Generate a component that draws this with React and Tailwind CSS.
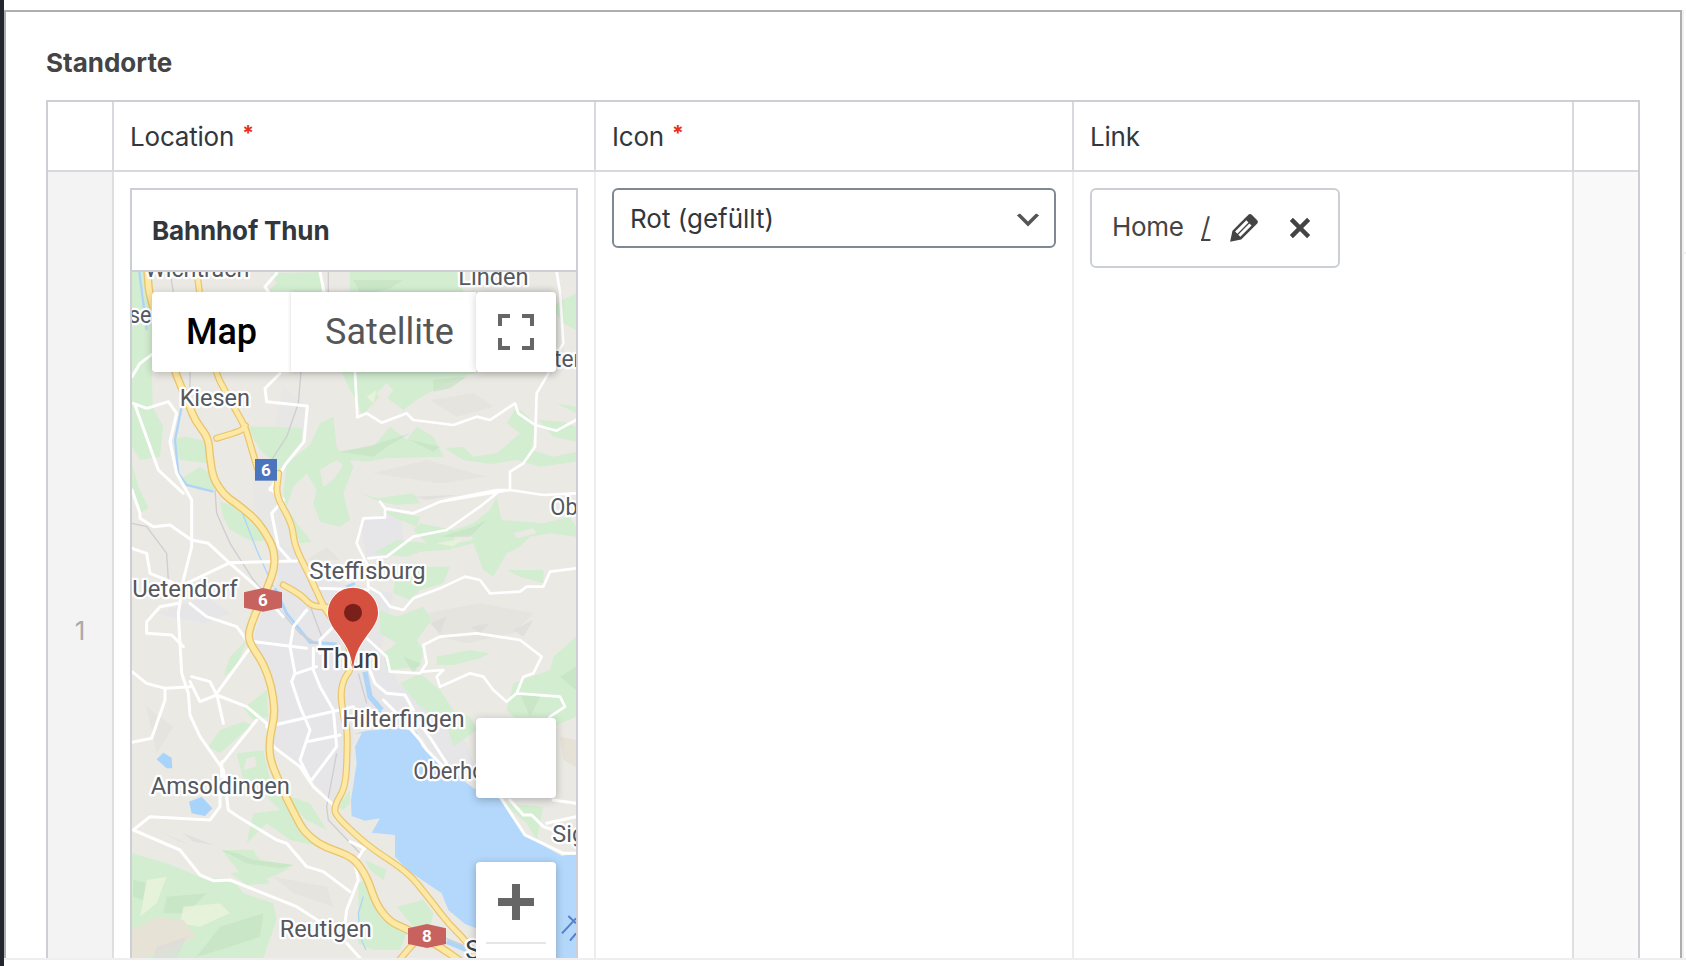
import React from 'react';

const LABELS = [
  ['Wichtrach', 75, 50, 313],
  ['Linden', 1015, 75, 211],
  ['seen', 27, 188, 136],
  ['ten', 1302, 320, 96],
  ['Kiesen', 179, 437, 211],
  ['Oberlangenegg', 1291, 766, 445],
  ['Steffisburg', 568, 956, 349],
  ['Uetendorf', 37, 1012, 316],
  ['Hilterfingen', 667, 1400, 367],
  ['Oberhofen', 880, 1556, 308],
  ['Amsoldingen', 92, 1603, 418],
  ['Sigriswil', 1297, 1745, 262],
  ['Reutigen', 479, 2032, 276],
];

const MOTORWAY = [
  [[82, 30], [88, 110], [165, 336], [205, 430], [225, 480], [265, 535], [270, 595], [280, 655], [312, 705], [355, 735], [415, 785], [460, 860], [465, 920], [440, 990], [405, 1062], [385, 1120], [390, 1150], [430, 1210], [455, 1280], [465, 1360], [448, 1440], [450, 1500], [490, 1595], [520, 1655], [550, 1712], [600, 1755], [700, 1792], [740, 1850], [770, 1935], [810, 1985], [870, 2012], [960, 2060], [1030, 2110]],
];
const MAIN_ROADS = [
  [[230, 30], [240, 110], [285, 336], [330, 420], [375, 500], [390, 550], [412, 625]],
  [[476, 640], [468, 705], [515, 790], [525, 860], [575, 960], [620, 1060], [680, 1120], [695, 1225], [672, 1255], [662, 1300], [670, 1370], [683, 1410], [678, 1575], [645, 1635], [645, 1665], [740, 1755], [865, 1838], [935, 1925], [985, 1990], [1045, 2050], [1080, 2110]],
  [[290, 535], [365, 512], [376, 497]],
  [[490, 975], [540, 1003], [575, 1038], [622, 1042]],
  [[830, 2110], [885, 2045], [920, 2020]],
];

// Rounds a polyline's corners with a short quadratic curve at each vertex.
function smooth(pts) {
  let d = `M${pts[0][0]} ${pts[0][1]}`;
  for (let i = 1; i < pts.length - 1; i += 1) {
    const [px, py] = pts[i - 1];
    const [x, y] = pts[i];
    const [nx, ny] = pts[i + 1];
    d += `L${x + (px - x) * 0.4} ${y + (py - y) * 0.4}Q${x} ${y} ${x + (nx - x) * 0.4} ${y + (ny - y) * 0.4}`;
  }
  const last = pts[pts.length - 1];
  return `${d}L${last[0]} ${last[1]}`;
}

function Terrain() {
  return (
    <>
      <g fill="#e6e5e7">
        <path d="M440 830L530 880L620 960L820 1000L800 1090L780 1180L830 1260L880 1360L830 1400L700 1410L690 1560L640 1630L560 1540L460 1450L450 1250L400 1140L440 1020L480 960Z" />
        <path d="M720 790L840 740L850 850L800 900L740 900ZM110 1060L260 1010L330 1060L250 1090ZM780 1240L900 1310L1040 1450L1070 1540L960 1510L900 1420Z" />
        <path d="M490 380L560 440L550 520L470 600L460 520ZM400 620L480 700L530 880L470 860L400 740Z" opacity=".7" />
      </g>
      <g fill="#e3e1dc" opacity=".6">
        <path d="M650 100L760 110L830 150L740 170ZM930 420L1060 400L1120 440L1010 470ZM760 640L920 600L1100 650L960 670ZM560 900L620 860L660 900ZM920 1060L1080 1030L1240 1060L1180 1120L1040 1150L960 1130ZM80 1340L160 1400L110 1480ZM460 1850L620 1880L640 1940L520 1900Z" />
      </g>
      <g fill="#d3edd1">
        <path d="M36 36H70L100 200L95 300L98 440L130 500L120 590L60 600L36 560ZM36 610L55 680L85 745L60 760L36 690Z" />
        <path d="M450 40L600 36L605 96H440L470 70ZM690 36H1010L1030 96H690ZM1290 140L1368 100V210L1330 190Z" />
        <path d="M665 336H1070L1000 360L940 390L890 420L850 450L810 420L790 400L750 440L725 470L715 430L690 390Z" />
        <path d="M170 535L200 530L265 545L270 590L278 600L262 610L180 600L165 570ZM178 660L240 620L268 640L285 690L240 690ZM300 725L350 740L415 795L440 840L400 845L330 810L310 770Z" />
        <path d="M380 500L470 500L545 505L545 545L500 600L480 640L465 610L420 570Z" />
        <path d="M500 610L570 555L600 490L640 470L650 560L660 575L760 560L810 500L860 540L890 500L940 530L955 560L970 590L800 595L740 605L690 600L700 620L670 700L680 740L690 780L660 800L600 785L580 730L590 690L560 640L520 680L500 740L530 790L575 845L540 850L510 790L490 700Z" />
        <path d="M975 565L1030 560L1060 590L1130 580L1200 520L1160 490L1190 440L1225 470L1245 500L1235 570L1300 590L1368 575V605L1260 620L1190 600L1110 612L1030 600ZM1255 480L1330 485L1368 500V545L1300 530ZM1310 430L1368 440V460Z" />
        <path d="M720 700L770 715L880 700L900 730L830 735L780 725ZM780 750L900 770L890 800L840 780ZM760 880L830 840L920 850L880 810L900 790L1000 810L1060 790L1110 750L1130 710L1145 780L1270 790L1350 770L1368 800V830L1290 820L1230 830L1200 860L1160 880L1120 950L1090 930L1060 850L980 870L900 875L860 890Z" />
        <path d="M830 920L990 920L970 970L900 990L870 1020L820 1000ZM1160 930L1270 930L1270 970L1200 950Z" />
        <path d="M780 1050L830 1070L910 1040L935 1080L890 1140L910 1170L900 1220L800 1230L790 1180L830 1150L780 1120Z" />
        <path d="M950 1190L1050 1170L1110 1180L1080 1195L1000 1215L950 1215ZM840 1270L900 1240L960 1290L1000 1350L1050 1370L1070 1410L1000 1460L980 1390L900 1340ZM1180 1270L1290 1230L1300 1190L1368 1130V1370L1300 1400L1210 1400L1160 1350Z" />
        <path d="M380 1140L350 1220L310 1250L330 1190ZM440 1290L445 1370L400 1380L370 1345ZM370 1385L395 1395L300 1480L265 1460L300 1410ZM350 1480L430 1470L450 1560L480 1600L570 1630L620 1710L560 1680L530 1650L600 1760L510 1740L440 1690L380 1750L400 1660L480 1650L440 1610L370 1560Z" />
        <path d="M305 1770L400 1770L420 1800L520 1815L480 1840L430 1860L360 1840ZM330 1840L420 1830L450 1870L380 1875ZM36 1780L140 1810L190 1830L240 1850L340 1860L370 1900L460 1930L470 1980L430 2094H36Z" />
        <path d="M715 1870L740 1860L780 1970L860 2020L840 2070L760 2070L715 2050ZM830 1940L910 1920L940 1960L930 2010L880 2000ZM735 1800L800 1830L790 1860L750 1830ZM1150 1630L1270 1640L1250 1740L1220 1690Z" />
        <path d="M690 1590L650 1640L670 1650L690 1630Z" />
      </g>
      <g fill="#ebe9e4">
        <path d="M600 630L650 600L670 615L640 660L610 680ZM380 1495L405 1490L410 1520L370 1530ZM770 400L800 370L820 390L790 430ZM1000 830L1050 820L1060 840L1010 850ZM1180 820L1240 805L1250 820L1190 835Z" />
      </g>
      <g fill="#c3e2c1" opacity=".65">
        <path d="M700 60L850 60L810 85L770 96H720ZM940 360L1040 350L990 385L940 395ZM660 575L760 555L870 520L800 560L760 590ZM870 540L960 560L940 575Z" />
        <path d="M960 830L1060 800L1100 780L1050 830ZM850 1190L900 1210L880 1240ZM1200 1300L1260 1310L1230 1370ZM1320 1250L1368 1220V1290Z" />
        <path d="M305 1770L350 1780L400 1800L520 1815L480 1825L380 1810ZM40 1860L80 1870L70 1920L40 1910ZM140 1910L260 1900L200 1960L130 1960ZM300 2000L430 1960L420 2030L330 2060L230 2090Z" />
      </g>
      <g fill="#e9f2db" opacity=".85">
        <path d="M740 410L770 390L760 430ZM950 850L1030 835L1000 860ZM80 1860L140 1850L110 1930L60 1970ZM190 1940L300 1930L330 1960L240 2000L180 1990Z" />
      </g>
      <path fill="#e7e2d6" d="M36 2010L110 1970L190 1980L230 2030L160 2060L70 2094H36ZM1320 1430L1368 1440V1520L1330 1500Z" />
      <g fill="#dddbd8" opacity=".7">
        <path d="M120 1715L210 1755L170 1740ZM190 1720L280 1755L220 1745ZM930 1090L980 1070L960 1120ZM1050 1100L1110 1090L1080 1120ZM1180 1110L1240 1080L1210 1130ZM880 710L1010 705L920 720ZM110 2060L200 2030L170 2094H100Z" />
      </g>
    </>
  );
}

function Water() {
  return (
    <>
      <path
        fill="#b3d8fb"
        d="M700 1422L740 1412L835 1405L890 1415L905 1460L965 1510L1060 1585L1150 1620L1175 1660L1215 1725L1325 1788L1368 1780V2110H1080L1068 2005L1035 1992L985 1950L965 1900L865 1832L825 1790L825 1725L755 1718L780 1675L735 1682L695 1668L693 1620L710 1510L705 1460L725 1420Z"
      />
      <path fill="#a8d3fb" d="M110 1498L130 1478L155 1493L157 1525L140 1525ZM207 1625L245 1610L277 1645L255 1668L215 1660Z" />
      <g fill="none" stroke="#aed5f8" strokeWidth="7">
        <path d="M58 36L70 130L80 210M185 440L165 540L175 640L200 675L280 695" />
        <path d="M465 985L500 1060L570 1147L650 1152" strokeWidth="9" />
        <path d="M735 1235L750 1310L785 1350" strokeWidth="16" />
        <path d="M360 740L410 870L460 980M730 1910L715 1960L720 2030L738 2070" strokeWidth="4" />
        <path d="M680 980L705 970M780 1345V1362" strokeWidth="8" />
        <path d="M980 2045L1040 2070" strokeWidth="14" />
      </g>
    </>
  );
}

function Roads() {
  return (
    <>
      <g fill="none" stroke="#cfcdd0" strokeWidth="4" strokeLinejoin="round">
        <path d="M150 36L160 96M210 336V390M543 336L535 430L500 530L455 600M625 36V96M285 690L290 760L330 850L400 960L540 1120L590 1150M36 790L80 800L140 880L145 960L190 975M560 1010L605 1130M715 1240L740 1330M650 1480L620 1640L625 1680L720 1780M940 2020L1040 2060" />
      </g>
      <g fill="none" stroke="#fff" strokeWidth="9" strokeLinejoin="round" strokeLinecap="round">
        <path d="M36 350L60 310L100 280M40 430L80 445L145 425L170 460L150 545L170 640L215 720V860L190 960L175 1060L185 1240L205 1300L210 1365L240 1430L310 1530L325 1650L355 1670L470 1740L500 1750L560 1820L610 1835L690 1895" />
        <path d="M45 435L115 630L190 700M36 690L60 760V775L100 800L150 795L215 840L265 850L330 910L410 980L490 1070M200 970L330 908L530 903M36 865L80 880L90 940L190 980M175 1030L120 1040L80 1085V1120L155 1125L190 1160M210 1030L260 1070L350 1100L380 1140M405 1145L560 1165" />
        <path d="M480 340L435 385L440 425L562 438L552 545L495 615L450 690M470 40L435 80L445 96M600 36L612 96" />
        <path d="M450 685L490 720L455 760L475 860L510 900M400 1150L290 1300L310 1390M36 1235L80 1270L135 1285L210 1280M135 1285L135 1320L95 1435L36 1447M210 1265L240 1325L290 1305L270 1265L215 1250M290 1305L380 1340L410 1365L440 1390L460 1460L540 1520L580 1580L640 1635" />
        <path d="M410 1380L310 1505M305 1505V1550M300 1600V1640L270 1680L90 1670L40 1710L180 1770L240 1845L280 1862L330 1860L530 1940L600 1985M680 2050L720 2094M735 1760L705 1810L715 1860L680 1950L675 1990L690 2010" />
        <path d="M560 1050L520 1100L510 1160L525 1240L515 1265L540 1340L570 1410L540 1500L570 1560M580 1165L580 1230L600 1280L640 1350L650 1460L575 1560M440 1400L700 1340M560 1445L660 1425M530 1240L590 1220M600 1180V1140L640 1100M590 985L745 990M690 1745L735 1765" />
        <path d="M705 336L712 472L740 460L785 488L860 460L880 480L1000 495L1070 470L1110 480L1185 430L1195 460L1245 495L1310 512L1368 480M1285 340L1250 400L1245 560L1210 610L1170 635V690L1270 705L1368 700M980 720L1130 690L1170 690M1310 36L1320 96L1330 250L1300 300" strokeWidth="8" />
        <path d="M780 725L795 745L880 760L960 725L1170 690M795 745V772L730 775L710 850L740 910L745 980M745 895L800 890L880 830L980 810L1080 740L1130 700" strokeWidth="8" />
        <path d="M745 980L780 1000L810 1040L850 1050L880 1015L960 985L1035 950L1080 960L1110 1000L1200 995L1220 980H1270L1290 935L1368 925" strokeWidth="8" />
        <path d="M740 1135L800 1190L810 1235L900 1240L920 1210L910 1155L960 1130L1070 1120L1200 1140L1265 1190L1240 1240L1210 1250L1190 1300L1160 1325L1120 1290L1090 1250L1050 1240L960 1280L950 1250L970 1230L905 1235M1190 1300L1320 1310L1335 1340L1290 1370L1270 1400" strokeWidth="8" />
        <path d="M730 1180L765 1270L800 1300L855 1305L880 1350M790 1320L840 1370L900 1440L920 1470L980 1530M900 1390L935 1440L980 1510M1140 1610L1215 1725L1330 1780L1368 1780M1170 1620L1210 1665H1235L1270 1700L1300 1710M1300 1620L1368 1630M1280 1690L1368 1670" />
      </g>
      <g fill="none" stroke="#e8c46f" strokeLinejoin="round">
        <g strokeWidth="25">{MOTORWAY.map((p) => <path key={p[0].join()} d={smooth(p)} />)}</g>
        <g strokeWidth="21" strokeLinecap="round">{MAIN_ROADS.map((p) => <path key={p[0].join()} d={smooth(p)} />)}</g>
      </g>
      <g fill="none" stroke="#fde8a4" strokeLinejoin="round">
        <g strokeWidth="17">{MOTORWAY.map((p) => <path key={p[0].join()} d={smooth(p)} />)}</g>
        <g strokeWidth="14" strokeLinecap="round">{MAIN_ROADS.map((p) => <path key={p[0].join()} d={smooth(p)} />)}</g>
      </g>
    </>
  );
}

function Labels() {
  return (
    <g className="font-['Roboto',sans-serif]" fontSize="71" stroke="#fff" strokeWidth="14" strokeLinejoin="round" paintOrder="stroke" fill="#55585e">
      {LABELS.map(([t, x, y, w]) => (
        <text key={t} x={x} y={y} textLength={w} lengthAdjust="spacingAndGlyphs">{t}</text>
      ))}
      <text x="592" y="1224" fontSize="82" textLength="186" lengthAdjust="spacingAndGlyphs" fill="#3c4046">Thun</text>
      <text x="1036" y="2096" fontSize="76" fill="#3c4046">Spiez</text>
    </g>
  );
}

function Shields() {
  return (
    <g className="font-['Roboto',sans-serif] font-bold" fill="#fff" fontSize="51" textAnchor="middle">
      <rect x="405" y="597" width="66" height="65" fill="#4a74bd" />
      <text x="438" y="648">6</text>
      <path fill="#c8625f" d="M372 997L429 984L486 997V1043L429 1055L372 1043Z" />
      <text x="429" y="1038">6</text>
      <path fill="#c8625f" d="M864 2005L921 1992L978 2005V2052L921 2064L864 2052Z" />
      <text x="921" y="2046">8</text>
    </g>
  );
}

function GoogleMap() {
  return (
    <div className="relative h-[686px] overflow-hidden bg-[#ebe9e4] font-['Roboto',sans-serif]">
      <svg className="block h-[686px] w-[444px]" viewBox="36 36 1332 2058">
        <Terrain />
        <Water />
        <Roads />
        <path d="M1326 2020L1368 1975M1350 2042L1368 2020M1345 1968L1368 1990" stroke="#5580c8" strokeWidth="6" fill="none" />
        <Labels />
        <Shields />
        <path
          d="M699 1230C694 1175 674 1150 650 1117C634 1095 624 1078 624 1058A75 75 0 0 1 774 1058C774 1078 764 1095 748 1117C724 1150 704 1175 699 1230Z"
          fill="#d5503f"
          stroke="#fff"
          strokeWidth="5"
          paintOrder="stroke"
        />
        <circle cx="699" cy="1058" r="27" fill="#7b1f1a" />
      </svg>
      <div className="absolute left-5 top-5 flex h-20 w-[404px] rounded-[4px] shadow-[0_2px_8px_rgba(0,0,0,0.22)]">
        <div className="flex w-[139px] items-center justify-center rounded-l-[4px] bg-white text-[36px] font-medium text-black">
          Map
        </div>
        <div className="flex w-[185px] items-center bg-white pl-[34px] text-[36px] text-[#565656] shadow-[0_0_4px_rgba(0,0,0,0.16)]">
          Satellite
        </div>
        <div className="flex w-20 items-center justify-center rounded-[4px] bg-white shadow-[0_0_8px_rgba(0,0,0,0.18)]">
          <svg className="size-9" viewBox="0 0 18 18" fill="#666">
            <path d="M0 0v6h2V2h4V0H0zm16 0h-4v2h4v4h2V0h-2zm0 16h-4v2h6v-6h-2v4zM2 12H0v6h6v-2H2v-4z" />
          </svg>
        </div>
      </div>
      <div className="absolute left-[344px] top-[446px] size-20 rounded-[4px] bg-white shadow-[0_2px_8px_rgba(0,0,0,0.25)]" />
      <div className="absolute left-[344px] top-[590px] flex h-[162px] w-20 flex-col items-center rounded-[4px] bg-white pt-[22px] shadow-[0_2px_8px_rgba(0,0,0,0.25)]">
        <svg className="size-9" viewBox="0 0 18 18" fill="#666">
          <path d="M18 7h-7V0H7v7H0v4h7v7h4v-7h7z" />
        </svg>
        <div className="mt-[22px] h-[2px] w-[60px] bg-[#e6e6e6]" />
      </div>
    </div>
  );
}

function HeadCell({ children, required }) {
  return (
    <div className="flex items-center border-l-2 border-[#d7d9de] pl-4 text-[26px] text-[#32373c]">
      <span className="tracking-[-0.2px]">{children}</span>
      {required && <span className="ml-2 pb-[5px] text-[21px] font-bold text-[#e62e22]">*</span>}
    </div>
  );
}

export default function App() {
  return (
    <div className="flex h-[966px] w-[1686px] overflow-hidden bg-white font-['Inter',sans-serif]">
      <div className="w-1 bg-[#23272d]" />
      <div className="flex w-[1682px] flex-col pt-[10px]">
        <div className="flex h-[948px]">
          <div className="w-[1678px] overflow-hidden border-2 border-b-0 border-[#aeaeb0] pl-10">
            <h2 className="flex h-[88px] items-center pt-[13px] text-[26px] font-bold leading-8 text-[#444]">
              Standorte
            </h2>
            <div className="w-[1594px] border-2 border-b-0 border-[#cdcfd4]">
              <div className="grid h-[70px] grid-cols-[64px_482px_478px_500px_66px] border-b-2 border-[#d7d9de]">
                <div />
                <HeadCell required>Location</HeadCell>
                <HeadCell required>Icon</HeadCell>
                <HeadCell>Link</HeadCell>
                <div className="border-l-2 border-[#d7d9de]" />
              </div>
              <div className="grid h-[918px] grid-cols-[64px_482px_478px_500px_66px]">
                <div className="flex items-center justify-center bg-[#f3f3f3] pb-[2px] text-[26px] text-[#aaa]">1</div>
                <div className="border-l-2 border-[#dfdfdf] px-4 pt-4">
                  <div className="border-2 border-[#ccd0d4]">
                    <div className="flex h-[82px] items-center border-b-2 border-[#ccd0d4] pl-5 text-[26px] font-bold tracking-[-0.15px] text-[#32373c]">
                      Bahnhof Thun
                    </div>
                    <GoogleMap />
                  </div>
                </div>
                <div className="border-l-2 border-[#ededed] px-4 pt-4">
                  <div className="flex h-[60px] items-center justify-between rounded-[6px] border-2 border-[#7e8993] pl-4 pr-[10px] text-[26px] text-[#32373c]">
                    <span>Rot (gefüllt)</span>
                    <svg className="mt-1 size-8" viewBox="0 0 20 20" fill="#555">
                      <path d="M5 6l5 5 5-5 2 1-7 7-7-7 2-1z" />
                    </svg>
                  </div>
                </div>
                <div className="border-l-2 border-[#ededed] px-4 pt-4">
                  <div className="flex h-20 w-[250px] items-center rounded-[6px] border-2 border-[#ccd0d4] pl-5 text-[26px] text-[#444]">
                    <span className="w-[89px] pb-[3px] tracking-[-0.3px]">Home</span>
                    <span className="w-[23px] pb-[3px] underline decoration-2 underline-offset-[3px] [text-decoration-skip-ink:none]">/</span>
                    <svg className="size-10" viewBox="0 0 20 20" fill="#444">
                      <path d="M13.89 3.39l2.71 2.72c.46.46.42 1.24.03 1.64l-8.01 8.02-5.56 1.16 1.16-5.58s7.6-7.63 7.99-8.03c.39-.39 1.22-.39 1.68.07zm-2.73 2.79l-5.59 5.61 1.11 1.11 5.54-5.65zm-2.97 8.23l5.58-5.6-1.07-1.08-5.59 5.6z" />
                    </svg>
                    <svg className="ml-4 size-10" viewBox="0 0 20 20" fill="#444">
                      <path
                        d="M14.95 6.46L11.41 10l3.54 3.54-1.41 1.41L10 11.42l-3.53 3.53-1.42-1.42L8.58 10 5.05 6.47l1.42-1.42L10 8.58l3.54-3.53z"
                        stroke="#444"
                        strokeWidth=".3"
                        strokeLinejoin="round"
                      />
                    </svg>
                  </div>
                </div>
                <div className="border-l-2 border-[#dfdfdf] bg-[#f9f9f9]" />
              </div>
            </div>
          </div>
          <div className="w-[2px] bg-[#f0f0f1]" />
          <div className="w-[2px] pt-[242px]">
            <div className="h-[2px] bg-[#f0f0f1]" />
          </div>
        </div>
        <div className="h-[2px] bg-[#eeeeef]" />
      </div>
    </div>
  );
}
